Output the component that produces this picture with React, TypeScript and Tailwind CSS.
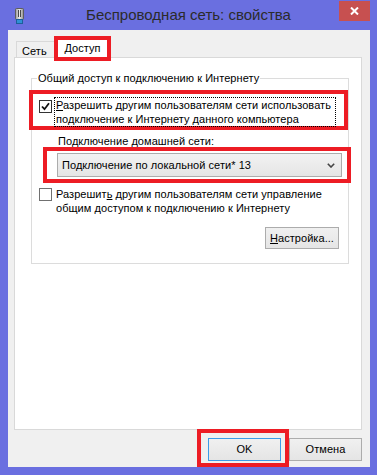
import React from "react";

const redBox = "border-4 border-[#ed1c24]";
const btn = "flex items-center justify-center border border-[#acacac] bg-linear-to-b from-[#f0f0f0] to-[#e5e5e5] text-black";

function AdapterIcon() {
  return (
    <svg width="9" height="16" viewBox="0 0 9 16">
      <defs>
        <linearGradient id="body" x1="0" x2="1" y1="0" y2="0">
          <stop offset="0" stopColor="#9a9a9a" />
          <stop offset="0.5" stopColor="#e8e8e8" />
          <stop offset="1" stopColor="#8a8a8a" />
        </linearGradient>
      </defs>
      <rect x="0.5" y="0.5" width="8" height="11" rx="1" fill="url(#body)" stroke="#5d5d5d" />
      <rect x="3" y="2" width="1" height="7" fill="#4a4a4a" />
      <rect x="5" y="2" width="1" height="7" fill="#4a4a4a" />
      <rect x="1.5" y="11.5" width="6" height="4" fill="#2f8fd6" stroke="#1d5f9a" />
    </svg>
  );
}

function Check({ checked, dark }: { checked?: boolean; dark?: boolean }) {
  return (
    <span className={`flex h-[13px] w-[13px] shrink-0 items-center justify-center border bg-white ${dark ? "border-[#333333]" : "border-[#707070]"}`}>
      {checked && (
        <svg width="9" height="9" viewBox="0 0 9 9">
          <path d="M1 4.5 L3.5 7.2 L8 1.2" stroke="#111" strokeWidth="1.8" fill="none" />
        </svg>
      )}
    </span>
  );
}

export default function App() {
  return (
    <div className="h-[475px] w-[377px] overflow-hidden bg-[#6a6fe0] font-['Liberation_Sans',Arial,sans-serif] text-[11px] tracking-[0.05px] text-black">
      {/* title bar */}
      <div className="grid h-[30px] grid-cols-[1fr_auto_1fr] items-start">
        <div className="pl-[15px] pt-[8px]">
          <AdapterIcon />
        </div>
        <div className="pt-[5px] text-[15px] leading-[20px] tracking-normal text-[#2b2b2b]">Беспроводная сеть: свойства</div>
        <div className="flex justify-end pr-[7px] pt-[1px]">
          <div className="flex h-[20px] w-[31px] items-center justify-center bg-[#c75050]">
            <svg width="9" height="8" viewBox="0 0 9 8">
              <path d="M1 0.5 L8 7.5 M8 0.5 L1 7.5" stroke="#fff" strokeWidth="2" />
            </svg>
          </div>
        </div>
      </div>

      {/* client area */}
      <div className="ml-[8px] flex h-[437px] w-[362px] flex-col bg-[#f0f0f0] pl-[6px]">
        {/* tabs */}
        <div className="flex h-[27px] items-end pl-[2px]">
          <div className="flex h-[16px] w-[40px] items-center border border-b-0 border-[#d9d9d9] bg-[#f0f0f0] pl-[5px] pt-[2px] leading-[14px]">
            Сеть
          </div>
          <div className={`relative z-10 -mb-[4px] -ml-[2px] flex h-[25px] w-[57px] items-center justify-center bg-white pb-[1px] leading-[14px] ${redBox}`}>
            Доступ
          </div>
        </div>

        {/* tab panel */}
        <div className="flex h-[373px] w-[348px] flex-col border border-[#d9d9d9] bg-white">
          <div className="ml-[16px] mt-[20px] flex h-[186px] w-[318px] flex-col border border-[#dcdcdc]">
            <div className="-mt-[8px] ml-[5px] w-fit bg-white px-[1px] leading-[15px]">Общий доступ к подключению к Интернету</div>

            <div className={`-ml-[3px] mt-[4px] flex h-[40px] w-[319px] shrink-0 items-start pl-[6px] pt-[6px] ${redBox}`}>
              <Check checked dark />
              <div className="-mt-[3px] ml-[2px] whitespace-nowrap border border-dotted border-black pl-[1px] pr-[4px] leading-[14px]">
                <span className="underline">Р</span>азрешить другим пользователям сети использовать
                <br />
                подключение к Интернету данного компьютера
              </div>
            </div>

            <div className="ml-[26px] mt-[4px] leading-[15px]">Подключение домашней сети:</div>

            <div className={`-mt-[2px] ml-[11px] h-[36px] w-[308px] shrink-0 pl-[10px] pt-[2px] ${redBox}`}>
              <div className="flex h-[24px] w-[285px] items-center justify-between border border-[#acacac] bg-linear-to-b from-[#f2f2f2] to-[#e5e5e5] pl-[4px] pr-[6px]">
                <span>Подключение по локальной сети* 13</span>
                <svg width="8" height="5" viewBox="0 0 8 5">
                  <path d="M0.8 0.8 L4 4 L7.2 0.8" stroke="#444" strokeWidth="1.6" fill="none" />
                </svg>
              </div>
            </div>

            <div className="ml-[7px] mt-[5px] flex items-start">
              <Check />
              <div className="-mt-[1px] ml-[4px] whitespace-nowrap leading-[14px]">
                Разрешит<span className="underline">ь</span> другим пользователям сети управление
                <br />
                общим доступом к подключению к Интернету
              </div>
            </div>

            <div className={`mr-[9px] mt-[12px] h-[22px] w-[74px] self-end ${btn}`}>
              <span>
                <span className="underline">Н</span>астройка...
              </span>
            </div>
          </div>
        </div>

        {/* bottom buttons */}
        <div className="-mt-[1px] flex justify-end pr-[8px]">
          <div className={`h-[38px] w-[92px] pl-[7px] pt-[5px] ${redBox}`}>
            <div className="flex h-[23px] w-[73px] items-center justify-center border border-[#3c9be8] bg-linear-to-b from-[#f0f0f0] to-[#e5e5e5]">
              OK
            </div>
          </div>
          <div className={`mt-[9px] h-[23px] w-[73px] ${btn}`}>Отмена</div>
        </div>
      </div>
    </div>
  );
}
